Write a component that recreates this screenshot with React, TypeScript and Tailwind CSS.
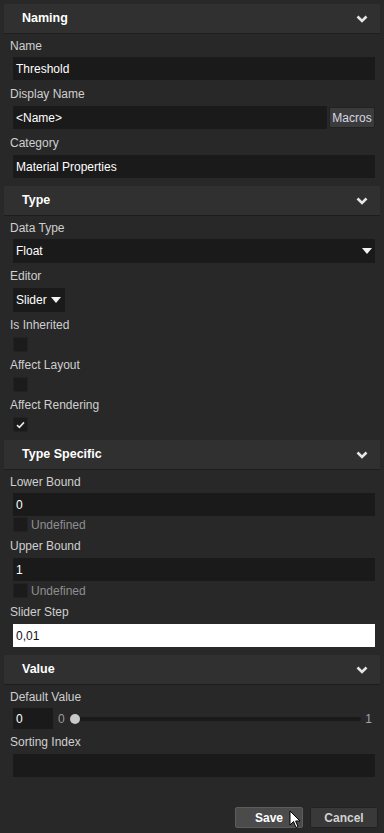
import type { ReactNode } from "react";

function Chevron() {
  return (
    <svg width="12" height="8" viewBox="0 0 12 8" aria-hidden="true">
      <polyline
        points="1.5,1.5 6,6 10.5,1.5"
        fill="none"
        stroke="#e6e6e6"
        strokeWidth="2.6"
      />
    </svg>
  );
}

function Triangle() {
  return (
    <svg width="10" height="6" viewBox="0 0 10 6" aria-hidden="true">
      <polygon points="0,0 10,0 5,6" fill="#f2f2f2" />
    </svg>
  );
}

function Section({ title }: { title: string }) {
  return (
    <div className="mx-[4px] flex h-[30px] items-center justify-between border-b border-[#1d1d1d] bg-[#303030] pl-[18px] pr-[12px]">
      <span className="text-[12.5px] font-bold text-white">{title}</span>
      <Chevron />
    </div>
  );
}

function Label({ children, h = "h-[25px]" }: { children: ReactNode; h?: string }) {
  return (
    <div className={`${h} flex items-center pl-[10px] pt-[1px] text-[12px] text-[#cfcfcf]`}>
      {children}
    </div>
  );
}

function Field({ value, white = false, yellow = false }: { value: string; white?: boolean; yellow?: boolean }) {
  return (
    <div
      className={`ml-[13px] mr-[9px] flex h-[23px] items-center pl-[3px] text-[12px] ${
        white ? "bg-white text-[#111]" : "bg-[#1a1a1a] text-white"
      } ${yellow ? "text-[#f4f0dc]" : ""}`}
    >
      {value}
    </div>
  );
}

function Checkbox({ checked = false }: { checked?: boolean }) {
  return (
    <div className="flex h-[15px] w-[15px] items-center justify-center border border-[#222] bg-[#1b1b1b]">
      {checked && (
        <svg width="9" height="8" viewBox="0 0 9 8" aria-hidden="true">
          <polyline points="1,4.2 3.4,6.4 8,1.4" fill="none" stroke="#e8e8e8" strokeWidth="1.6" />
        </svg>
      )}
    </div>
  );
}

function Undefined({ mt }: { mt: string }) {
  return (
    <div className={`${mt} ml-[13px] flex h-[15px] items-center gap-[3px]`}>
      <Checkbox />
      <span className="text-[12px] text-[#8f8f8f]">Undefined</span>
    </div>
  );
}

export default function App() {
  return (
    <div
      className="relative h-[833px] w-[384px] overflow-hidden bg-[#282828] pt-[4px]"
      style={{ fontFamily: '"Liberation Sans", Arial, sans-serif' }}
    >
      <Section title="Naming" />
      <Label h="h-[23px]">Name</Label>
      <Field value="Threshold" />
      <Label h="h-[26px]">Display Name</Label>
      <div className="ml-[13px] mr-[9px] flex h-[23px] items-center gap-[2px]">
        <div className="flex h-full flex-1 items-center bg-[#1a1a1a] pl-[3px] text-[12px] text-white">
          &lt;Name&gt;
        </div>
        <button className="flex h-[21px] w-[46px] items-center justify-center rounded-[2px] border border-[#222] bg-[#3b3b3b] text-[12px] text-[#d6d6e6]">
          Macros
        </button>
      </div>
      <Label h="h-[26px]">Category</Label>
      <Field value="Material Properties" />

      <div className="h-[8px]" />
      <Section title="Type" />
      <Label h="h-[23px]">Data Type</Label>
      <div className="ml-[13px] mr-[9px] flex h-[24px] items-center justify-between bg-[#1a1a1a] pl-[3px] pr-[3px] text-[12px] text-white">
        <span>Float</span>
        <Triangle />
      </div>
      <Label>Editor</Label>
      <div className="ml-[13px] flex h-[24px] w-[52px] items-center justify-between bg-[#1a1a1a] pl-[3px] pr-[4px] text-[12px] text-white">
        <span>Slider</span>
        <Triangle />
      </div>
      <Label>Is Inherited</Label>
      <div className="ml-[13px]">
        <Checkbox />
      </div>
      <Label>Affect Layout</Label>
      <div className="ml-[13px]">
        <Checkbox />
      </div>
      <Label>Affect Rendering</Label>
      <div className="ml-[13px]">
        <Checkbox checked />
      </div>

      <div className="h-[8px]" />
      <Section title="Type Specific" />
      <Label h="h-[23px]">Lower Bound</Label>
      <Field value="0" />
      <Undefined mt="mt-[1px]" />
      <Label h="h-[26px]">Upper Bound</Label>
      <Field value="1" yellow />
      <Undefined mt="mt-[2px]" />
      <Label h="h-[26px]">Slider Step</Label>
      <Field value="0,01" white />

      <div className="h-[8px]" />
      <Section title="Value" />
      <Label h="h-[23px]">Default Value</Label>
      <div className="ml-[13px] mr-[12px] flex h-[21px] items-center">
        <div className="flex h-full w-[40px] items-center bg-[#1a1a1a] pl-[3px] text-[12px] text-white">
          0
        </div>
        <span className="ml-[5px] text-[12px] text-[#9a9a9a]">0</span>
        <div className="relative ml-[5px] flex h-full flex-1 items-center">
          <div className="h-[4px] w-full rounded-full bg-[#1a1a1a]" />
          <div className="absolute left-0 h-[10px] w-[10px] rounded-full bg-[#c9c9c9]" />
        </div>
        <span className="ml-[4px] text-[12px] text-[#9aa6b4]">1</span>
      </div>
      <Label>Sorting Index</Label>
      <Field value="" />

      <div className="mr-[6px] mt-[30px] flex justify-end gap-[7px]">
        <button className="flex h-[21px] w-[68px] items-center justify-center rounded-[2px] border border-[#5c5c5c] bg-[#4b4b4b] text-[12px] font-bold text-white">
          Save
        </button>
        <button className="flex h-[21px] w-[68px] items-center justify-center rounded-[2px] border border-[#222] bg-[#393939] text-[12px] font-bold text-[#d2d2d2]">
          Cancel
        </button>
      </div>

      <svg
        className="absolute left-[289px] top-[810px]"
        width="12"
        height="20"
        viewBox="0 0 12 20"
        aria-hidden="true"
      >
        <path
          d="M1 1 L1 15 L4.5 11.5 L7 17.5 L9 16.6 L6.6 11 L11 11 Z"
          fill="#ffffff"
          stroke="#000000"
          strokeWidth="1"
          strokeLinejoin="round"
        />
      </svg>
    </div>
  );
}
